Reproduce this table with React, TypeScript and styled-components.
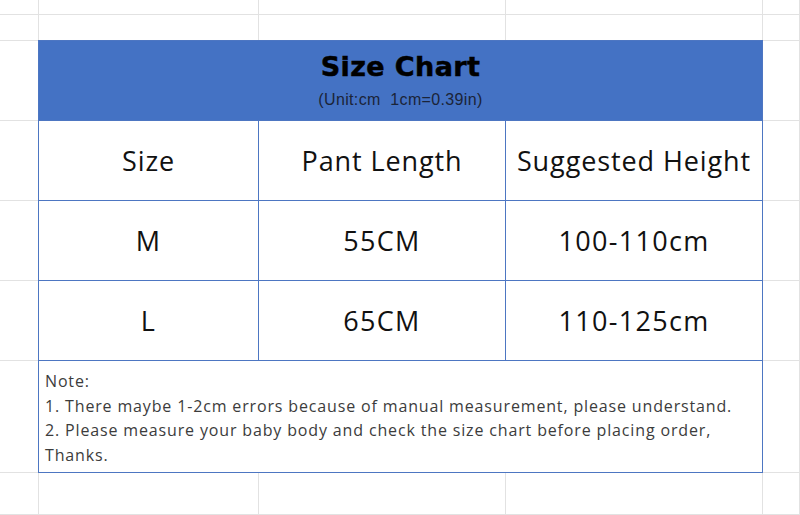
import React from 'react'
import styled, { createGlobalStyle } from 'styled-components'

const GlobalStyle = createGlobalStyle`
    html,
    body {
        margin: 0;
        padding: 0;
        background: #ffffff;
    }
`

const colors = {
    grid: '#e2e2e2',
    blue: '#4472c4',
    border: '#4d76c2',
    text: '#111111',
    note: '#3c3c3c',
}

// spreadsheet columns / rows, each track ends with its 1px line
const Sheet = styled.div`
    display: grid;
    grid-template-columns: 39px 220px 247px 257px 1fr;
    grid-template-rows: 15px 26px 80px 80px 80px 80px 112px 1fr;
    width: 800px;
    height: 515px;
    overflow: hidden;
    font-family: 'Open Sans', 'Noto Sans', sans-serif;
`

const EmptyCell = styled.div`
    border-right: 1px solid ${colors.grid};
    border-bottom: 1px solid ${colors.grid};
`

const Table = styled.div`
    grid-column: 2 / 5;
    grid-row: 3 / 8;
    display: grid;
    grid-template-columns: subgrid;
    grid-template-rows: subgrid;
    margin: -1px 0 0 -1px;
    border-top: 1px solid ${colors.border};
    border-left: 1px solid ${colors.border};
    background: #ffffff;
`

const TableCell = styled.div<{ $span?: boolean }>`
    grid-column: ${({ $span }) => ($span ? '1 / 4' : 'auto')};
    border-right: 1px solid ${colors.border};
    border-bottom: 1px solid ${colors.border};
    display: flex;
    align-items: center;
    justify-content: center;
    min-width: 0;
`

const TitleCell = styled(TableCell)`
    flex-direction: column;
    background: ${colors.blue};
`

const Title = styled.div`
    font-family: 'DejaVu Sans', sans-serif;
    font-weight: bold;
    font-size: 27px;
    line-height: 30px;
    letter-spacing: 0.4px;
    color: #000000;
    -webkit-text-stroke: 0.5px #000000;
    margin-bottom: 8px;
`

const Subtitle = styled.div`
    font-family: 'Liberation Sans', Arial, sans-serif;
    font-size: 16px;
    line-height: 20px;
    letter-spacing: 0.35px;
    color: #1b2438;
    white-space: pre;
`

const CellText = styled.span<{ $value?: boolean }>`
    font-size: 27px;
    font-weight: ${({ $value }) => ($value ? 500 : 400)};
    letter-spacing: ${({ $value }) => ($value ? '1.3px' : '0.9px')};
    color: ${colors.text};
    white-space: nowrap;
`

const NoteCell = styled(TableCell)`
    flex-direction: column;
    align-items: flex-start;
    justify-content: flex-start;
    padding: 8px 6px 0;
    font-size: 16px;
    line-height: 24.6px;
    letter-spacing: 0.85px;
    color: ${colors.note};
`

const headers = ['Size', 'Pant Length', 'Suggested Height']
const rows = [
    ['M', '55CM', '100-110cm'],
    ['L', '65CM', '110-125cm'],
]

const notes = [
    'Note:',
    '1. There maybe 1-2cm errors because of manual measurement, please understand.',
    '2. Please measure your baby body and check the size chart before placing order,',
    'Thanks.',
]

// which sheet cells sit outside the chart
const emptyCells: string[] = []
for (let r = 0; r < 8; r++) {
    for (let c = 0; c < 5; c++) {
        const inTable = r >= 2 && r <= 6 && c >= 1 && c <= 3
        if (!inTable) emptyCells.push(`${r}-${c}`)
    }
}

const EmptyAt = styled(EmptyCell)<{ $row: number; $col: number }>`
    grid-row: ${({ $row }) => $row + 1};
    grid-column: ${({ $col }) => $col + 1};
`

const App = () => {
    return (
        <>
            <GlobalStyle />
            <Sheet>
                {emptyCells.map((key) => {
                    const [r, c] = key.split('-').map(Number)
                    return <EmptyAt key={key} $row={r} $col={c} />
                })}
                <Table>
                    <TitleCell $span>
                        <Title>Size Chart</Title>
                        <Subtitle>{'(Unit:cm  1cm=0.39in)'}</Subtitle>
                    </TitleCell>
                    {headers.map((h) => (
                        <TableCell key={h}>
                            <CellText>{h}</CellText>
                        </TableCell>
                    ))}
                    {rows.map((row) =>
                        row.map((v, i) => (
                            <TableCell key={row[0] + i}>
                                <CellText $value>{v}</CellText>
                            </TableCell>
                        ))
                    )}
                    <NoteCell $span>
                        {notes.map((n) => (
                            <div key={n}>{n}</div>
                        ))}
                    </NoteCell>
                </Table>
            </Sheet>
        </>
    )
}

export default App
